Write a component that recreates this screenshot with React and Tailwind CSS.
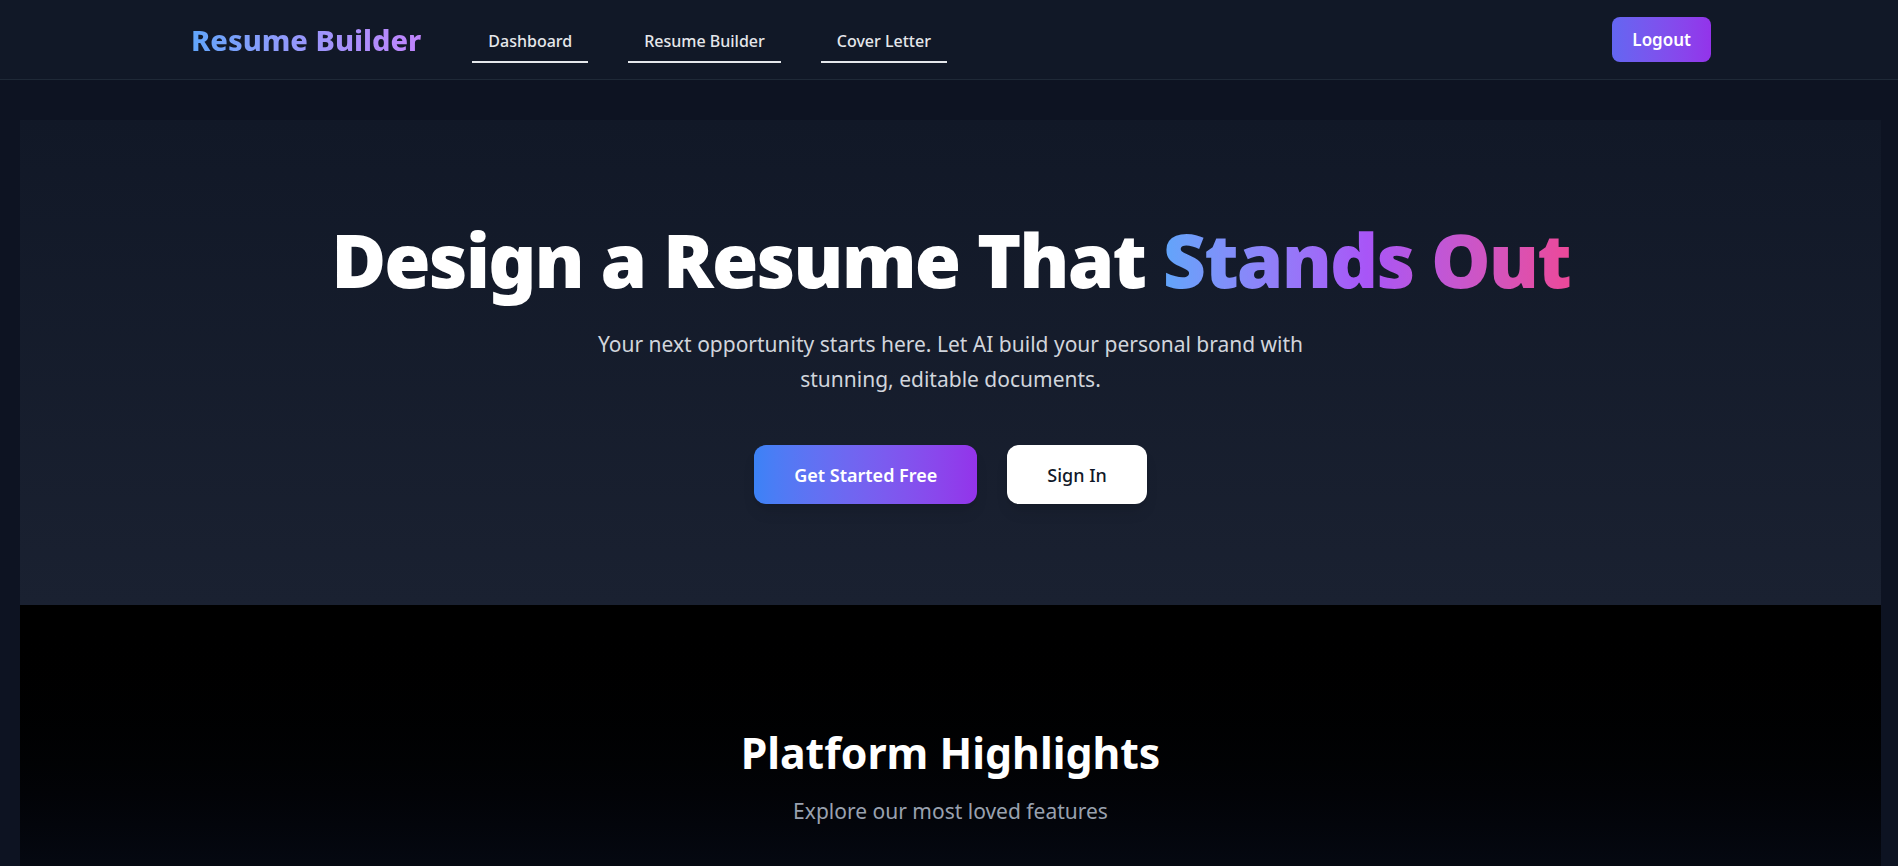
const navLinks = ["Dashboard", "Resume Builder", "Cover Letter"];

const Navbar = () => (
  <nav className="h-20 bg-[#111827] border-b border-[#1f2937]">
    <div className="h-full flex items-center justify-between pl-[191px] pr-[187px]">
      <div className="flex items-center">
        <span className="text-[29px] font-extrabold bg-gradient-to-r from-[#60a5fa] to-[#c084fc] bg-clip-text text-transparent">
          Resume Builder
        </span>
        <div className="flex items-center gap-10 ml-[51px]">
          {navLinks.map((link) => (
            <a
              key={link}
              href="#"
              className="px-4 pt-3 pb-2 text-[16px] font-medium text-gray-200 border-b-2 border-gray-200"
            >
              {link}
            </a>
          ))}
        </div>
      </div>
      <button className="h-[45px] px-5 rounded-lg bg-gradient-to-r from-[#6366f1] to-[#9333ea] text-white text-[17px] font-semibold">
        Logout
      </button>
    </div>
  </nav>
);

const Hero = () => (
  <section className="bg-gradient-to-b from-[#111827] to-[#1a2131] pt-[89px] pb-[101px] text-center">
    <h1 className="text-[75px] leading-[100px] font-black text-white tracking-tight">
      Design a Resume That{" "}
      <span className="bg-gradient-to-r from-[#60a5fa] via-[#a855f7] to-[#ec4899] bg-clip-text text-transparent">
        Stands Out
      </span>
    </h1>
    <p className="mt-[18px] mx-auto max-w-[740px] text-[21px] leading-[35px] text-gray-300">
      Your next opportunity starts here. Let AI build your personal brand with
      stunning, editable documents.
    </p>
    <div className="mt-12 flex justify-center gap-[30px]">
      <button className="h-[59px] px-10 rounded-xl bg-gradient-to-r from-[#3b82f6] to-[#9333ea] text-white text-lg font-semibold shadow-lg">
        Get Started Free
      </button>
      <button className="h-[59px] px-10 rounded-xl bg-white text-gray-900 text-lg font-medium shadow-lg">
        Sign In
      </button>
    </div>
  </section>
);

const Highlights = () => (
  <section className="h-[400px] bg-gradient-to-b from-black to-[#111827] pt-[121px] text-center">
    <h2 className="text-[42.8px] leading-[54px] font-bold text-white">
      Platform Highlights
    </h2>
    <p className="mt-4 text-[21px] text-gray-400">Explore our most loved features</p>
  </section>
);

export default function App() {
  return (
    <div
      className="min-h-screen bg-[#0d1322]"
      style={{ fontFamily: '"Noto Sans", "Open Sans", sans-serif' }}
    >
      <Navbar />
      <main className="pt-10 pl-5 pr-[17px]">
        <Hero />
        <Highlights />
      </main>
    </div>
  );
}
